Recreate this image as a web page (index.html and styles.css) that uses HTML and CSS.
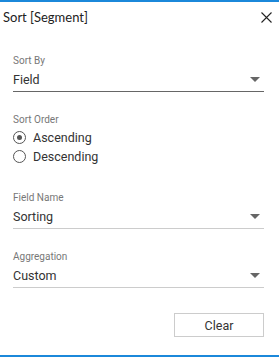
FILE: index.html
```html
<!DOCTYPE html>
<html lang="en">
<head>
  <meta charset="UTF-8">
  <title>Sort [Segment]</title>
  <link rel="stylesheet" href="styles.css">
</head>
<body>

  <div class="dialog">
    <div class="dialog-header">
      <span class="dialog-title">Sort [Segment]</span>
      <svg class="close" width="11" height="11" viewBox="0 0 11 11">
        <path d="M0.5 0.5 L10.5 10.5 M10.5 0.5 L0.5 10.5" stroke="#222" stroke-width="1.1" fill="none"/>
      </svg>
    </div>

    <div class="dialog-body">
      <div class="field">
        <label>Sort By</label>
        <div class="select active">
          <span>Field</span>
          <span class="caret"></span>
        </div>
      </div>

      <div class="field">
        <label>Sort Order</label>
        <div class="radio-group">
          <div class="radio checked"><span class="dot"></span>Ascending</div>
          <div class="radio"><span class="dot"></span>Descending</div>
        </div>
      </div>

      <div class="field">
        <label>Field Name</label>
        <div class="select">
          <span>Sorting</span>
          <span class="caret"></span>
        </div>
      </div>

      <div class="field">
        <label>Aggregation</label>
        <div class="select">
          <span>Custom</span>
          <span class="caret"></span>
        </div>
      </div>
    </div>

    <div class="dialog-footer">
      <button type="button">Clear</button>
    </div>
  </div>

</body>
</html>
```

FILE: styles.css
```css
body {
  margin: 0;
  padding: 0;
  background-color: white;
  font-family: Roboto, Arial, sans-serif;
}

.dialog {
  width: 279px;
  height: 357px;
  box-sizing: border-box;
  border-top: 2px solid #1b88da;
  border-bottom: 2px solid #1b88da;
  display: flex;
  flex-direction: column;
}

.dialog-header {
  display: flex;
  justify-content: space-between;
  align-items: center;
  height: 30px;
  padding: 0 7px 0 3px;
}

.dialog-title {
  font-family: Lato, "Open Sans", sans-serif;
  font-size: 13px;
  color: #222;
}

.dialog-body {
  padding: 22px 15px 0 13px;
  flex: 1;
}

.field {
  margin-bottom: 21px;
}

.field label {
  display: block;
  font-size: 10px;
  color: #777;
  height: 13px;
  line-height: 13px;
}

.select {
  display: flex;
  justify-content: space-between;
  align-items: center;
  height: 24px;
  font-size: 12.5px;
  color: #333;
  border-bottom: 1px solid #ccc;
}

.select.active {
  border-bottom-color: #666;
}

.caret {
  width: 0;
  height: 0;
  border-left: 5px solid transparent;
  border-right: 5px solid transparent;
  border-top: 5px solid #666;
  margin-right: 4px;
  margin-top: 1px;
}

.radio-group {
  padding: 2px 0 4px;
}

.radio {
  display: flex;
  align-items: center;
  height: 19px;
  font-size: 12.5px;
  color: #333;
}

.radio .dot {
  width: 11px;
  height: 11px;
  border: 1px solid #555;
  border-radius: 50%;
  margin-right: 7px;
  position: relative;
}

.radio.checked .dot::after {
  content: "";
  position: absolute;
  left: 3px;
  top: 3px;
  width: 5px;
  height: 5px;
  border-radius: 50%;
  background-color: #555;
}

.dialog-footer {
  display: flex;
  justify-content: flex-end;
  padding: 0 15px 18px 0;
}

button {
  width: 90px;
  height: 24px;
  background-color: white;
  border: 1px solid #ccc;
  font-family: Roboto, Arial, sans-serif;
  font-size: 12.5px;
  color: #333;
}
```
